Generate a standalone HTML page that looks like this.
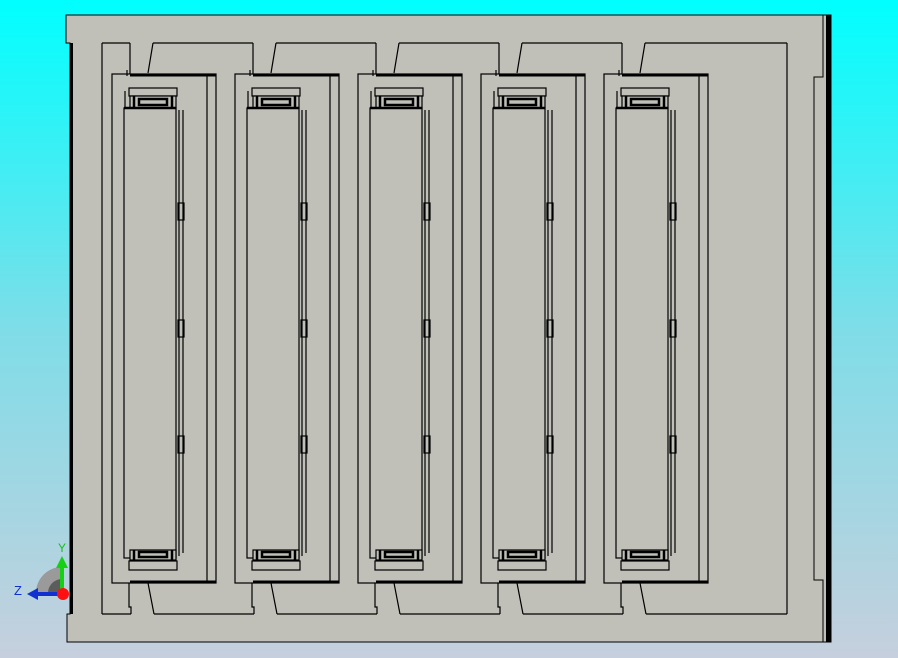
<!DOCTYPE html>
<html><head><style>
html,body{margin:0;padding:0;width:898px;height:658px;overflow:hidden;}
body{background:linear-gradient(#00ffff 0%,#7fdde8 50%,#c6cfdd 100%);}
svg{position:absolute;left:0;top:0;}
</style></head><body>
<svg width="898" height="658" viewBox="0 0 898 658" xmlns="http://www.w3.org/2000/svg">
<defs>
<g id="m" fill="none" stroke="#000" stroke-width="1.2">
  <!-- top notch -->
  <polyline points="130,43 130,74"/>
  <polyline points="153,43 148,73"/>
  <line x1="127" y1="70" x2="127" y2="76"/>
  <!-- module outer -->
  <rect x="112" y="74" width="104" height="509"/>
  <line x1="207" y1="76" x2="207" y2="583"/>
  <line x1="130" y1="75" x2="216" y2="75" stroke-width="3"/>
  <line x1="130" y1="582" x2="216" y2="582" stroke-width="3"/>
  <!-- connector top -->
  <rect x="129" y="88" width="48" height="8" fill="#c0c0b8"/>
  <rect x="130" y="96" width="46" height="12" fill="#c0c0b8"/>
  <rect x="139" y="99" width="28" height="6" stroke-width="2.5"/>
  <line x1="134" y1="96" x2="134" y2="108" stroke-width="2.5"/>
  <line x1="172" y1="96" x2="172" y2="108" stroke-width="2.5"/>
  <line x1="125" y1="91" x2="125" y2="108"/>
  <!-- body -->
  <rect x="124" y="108" width="52" height="450"/>
  <line x1="124" y1="108" x2="176" y2="108" stroke-width="2.5"/>
  <line x1="179" y1="110" x2="179" y2="556"/>
  <line x1="183" y1="110" x2="183" y2="553"/>
  <rect x="178" y="203" width="6" height="17"/>
  <rect x="178" y="320" width="6" height="17"/>
  <rect x="178" y="436" width="6" height="17"/>
  <!-- connector bottom -->
  <rect x="130" y="550" width="46" height="10" fill="#c0c0b8"/>
  <rect x="139" y="552" width="28" height="5" stroke-width="2.5"/>
  <line x1="134" y1="550" x2="134" y2="560" stroke-width="2.5"/>
  <line x1="172" y1="550" x2="172" y2="560" stroke-width="2.5"/>
  <rect x="129" y="561" width="48" height="9" fill="#c0c0b8"/>
  <!-- bottom notch -->
  <polyline points="129,583 129,607 131,607 131,614"/>
  <polyline points="148,583 154,614"/>
</g>
</defs>
<!-- main plate -->
<polygon points="66,15 831,15 831,642 67,642 67,614 70,614 70,43 66,43" fill="#c0c0b8" stroke="#000" stroke-width="1"/>
<rect x="70" y="43" width="3" height="571" fill="#000"/>
<rect x="826" y="15" width="5" height="627" fill="#000"/>
<polyline points="823,15 823,77 814,77 814,580 823,580 823,642" fill="none" stroke="#000"/>
<!-- inner frame -->
<g fill="none" stroke="#000" stroke-width="1.2">
  <line x1="102" y1="43" x2="102" y2="614"/>
  <line x1="787" y1="43" x2="787" y2="614"/>
  <line x1="102" y1="43" x2="130" y2="43"/>
  <line x1="153" y1="43" x2="253" y2="43"/>
  <line x1="276" y1="43" x2="376" y2="43"/>
  <line x1="399" y1="43" x2="499" y2="43"/>
  <line x1="522" y1="43" x2="622" y2="43"/>
  <line x1="645" y1="43" x2="787" y2="43"/>
  <line x1="102" y1="614" x2="131" y2="614"/>
  <line x1="154" y1="614" x2="254" y2="614"/>
  <line x1="277" y1="614" x2="377" y2="614"/>
  <line x1="400" y1="614" x2="500" y2="614"/>
  <line x1="523" y1="614" x2="623" y2="614"/>
  <line x1="646" y1="614" x2="787" y2="614"/>
</g>
<use href="#m"/>
<use href="#m" transform="translate(123,0)"/>
<use href="#m" transform="translate(246,0)"/>
<use href="#m" transform="translate(369,0)"/>
<use href="#m" transform="translate(492,0)"/>
<!-- triad -->
<path d="M36,593 A26,26 0 0 1 62,567 L62,593 Z" fill="#9a9a9a"/>
<path d="M48,593 A14,14 0 0 1 62,579 L62,593 Z" fill="#5c5c5c"/>
<line x1="62" y1="593" x2="62" y2="566" stroke="#16d016" stroke-width="4"/>
<polygon points="56,568 68,568 62,556" fill="#16d016"/>
<line x1="62" y1="594" x2="36" y2="594" stroke="#1030d0" stroke-width="4"/>
<polygon points="38,588 38,600 27,594" fill="#1030d0"/>
<circle cx="63" cy="594" r="6" fill="#ff1010"/>
<text x="58" y="552" font-family="Liberation Sans, sans-serif" font-size="12" fill="#16c016">Y</text>
<text x="14" y="595" font-family="Liberation Sans, sans-serif" font-size="13" fill="#1030d0">Z</text>
</svg>
</body></html>
